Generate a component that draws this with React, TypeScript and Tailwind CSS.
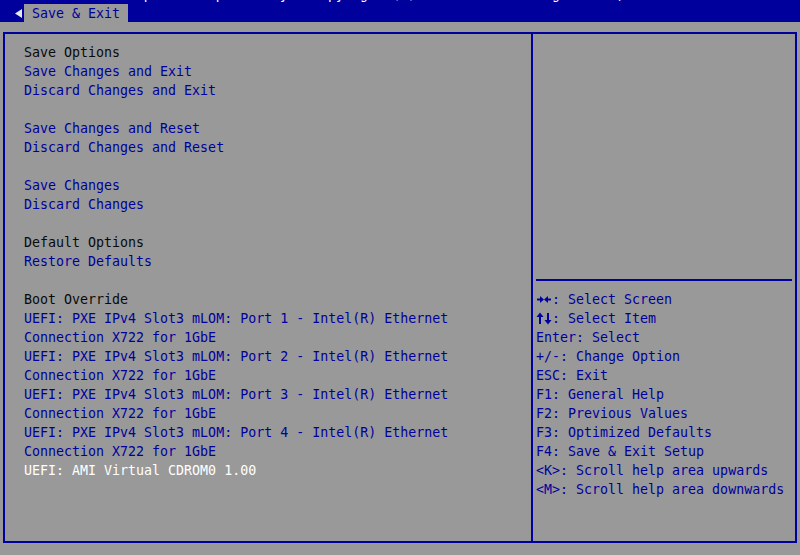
import { Fragment } from "react";

const mono = "font-['DejaVu_Sans_Mono','Liberation_Mono',monospace] text-[13.3px] leading-[19px]";

type Row = { text: string; tone?: "head" | "item" | "sel" } | null;

const options: Row[] = [
  { text: "Save Options", tone: "head" },
  { text: "Save Changes and Exit" },
  { text: "Discard Changes and Exit" },
  null,
  { text: "Save Changes and Reset" },
  { text: "Discard Changes and Reset" },
  null,
  { text: "Save Changes" },
  { text: "Discard Changes" },
  null,
  { text: "Default Options", tone: "head" },
  { text: "Restore Defaults" },
  null,
  { text: "Boot Override", tone: "head" },
  { text: "UEFI: PXE IPv4 Slot3 mLOM: Port 1 - Intel(R) Ethernet" },
  { text: "Connection X722 for 1GbE" },
  { text: "UEFI: PXE IPv4 Slot3 mLOM: Port 2 - Intel(R) Ethernet" },
  { text: "Connection X722 for 1GbE" },
  { text: "UEFI: PXE IPv4 Slot3 mLOM: Port 3 - Intel(R) Ethernet" },
  { text: "Connection X722 for 1GbE" },
  { text: "UEFI: PXE IPv4 Slot3 mLOM: Port 4 - Intel(R) Ethernet" },
  { text: "Connection X722 for 1GbE" },
  { text: "UEFI: AMI Virtual CDROM0 1.00", tone: "sel" },
];

const LeftRight = () => (
  <svg width="16" height="19" viewBox="0 0 16 19" fill="#00009c" stroke="#00009c">
    <line x1="1" y1="9.5" x2="6" y2="9.5" strokeWidth="2" />
    <path d="M4 6 L8 9.5 L4 13 Z" stroke="none" />
    <line x1="10" y1="9.5" x2="15" y2="9.5" strokeWidth="2" />
    <path d="M12 6 L8 9.5 L12 13 Z" stroke="none" />
  </svg>
);

const UpDown = () => (
  <svg width="16" height="19" viewBox="0 0 16 19" fill="#00009c" stroke="#00009c">
    <line x1="4" y1="7" x2="4" y2="15" strokeWidth="2" />
    <path d="M0.5 8 L4 3.5 L7.5 8 Z" stroke="none" />
    <line x1="12" y1="4" x2="12" y2="12" strokeWidth="2" />
    <path d="M8.5 11 L12 15.5 L15.5 11 Z" stroke="none" />
  </svg>
);

const help: [string, string][] = [
  ["lr", ": Select Screen"],
  ["ud", ": Select Item"],
  ["", "Enter: Select"],
  ["", "+/-: Change Option"],
  ["", "ESC: Exit"],
  ["", "F1: General Help"],
  ["", "F2: Previous Values"],
  ["", "F3: Optimized Defaults"],
  ["", "F4: Save & Exit Setup"],
  ["", "<K>: Scroll help area upwards"],
  ["", "<M>: Scroll help area downwards"],
];

const toneClass = (tone?: string) => {
  if (tone === "head") return "text-[#0a0a0a]";
  if (tone === "sel") return "text-white";
  return "text-[#00009c]";
};

export default function App() {
  return (
    <div className={`w-[800px] h-[555px] bg-[#999999] overflow-hidden ${mono}`}>
      {/* top bar */}
      <div className="h-[22px] bg-[#00009c] flex flex-col">
        <div className="h-[4px] overflow-hidden">
          <div className="mt-[-15px] text-center text-white whitespace-pre">
            Aptio Setup Utility - Copyright (C) 2019 American Megatrends, Inc.
          </div>
        </div>
        <div className="flex h-[18px] items-center">
          <svg width="7" height="9" viewBox="0 0 7 9" className="ml-[15px] mr-[2px]">
            <path d="M7 0 L0 4.5 L7 9 Z" fill="#e8e8e8" />
          </svg>
          <div className="h-[18px] bg-[#999999] px-[8px] pt-[1px] leading-[18px] text-[#00009c] whitespace-pre">
            Save & Exit
          </div>
        </div>
      </div>

      {/* main frame */}
      <div className="mt-[10px] ml-[3px] w-[794px] h-[511px] border-2 border-[#00009c] flex">
        <div className="w-[526px] pt-[9px] pl-[19px]">
          {options.map((row, i) => (
            <Fragment key={i}>
              {row ? (
                <div className={`h-[19px] whitespace-pre ${toneClass(row.tone)}`}>{row.text}</div>
              ) : (
                <div className="h-[19px]" />
              )}
            </Fragment>
          ))}
        </div>
        <div className="flex-1 border-l-2 border-[#00009c] pt-[9px] pl-[3px] pr-[3px] flex flex-col">
          <div className="h-[228px]" />
          <div className="h-[19px] flex items-center">
            <div className="w-full h-[2px] bg-[#00009c] mt-[-2px]" />
          </div>
          {help.map(([k, h]) => (
            <div key={h} className="h-[19px] whitespace-pre text-[#00009c] flex">
              {k === "lr" && <LeftRight />}
              {k === "ud" && <UpDown />}
              <span>{h}</span>
            </div>
          ))}
        </div>
      </div>
    </div>
  );
}
